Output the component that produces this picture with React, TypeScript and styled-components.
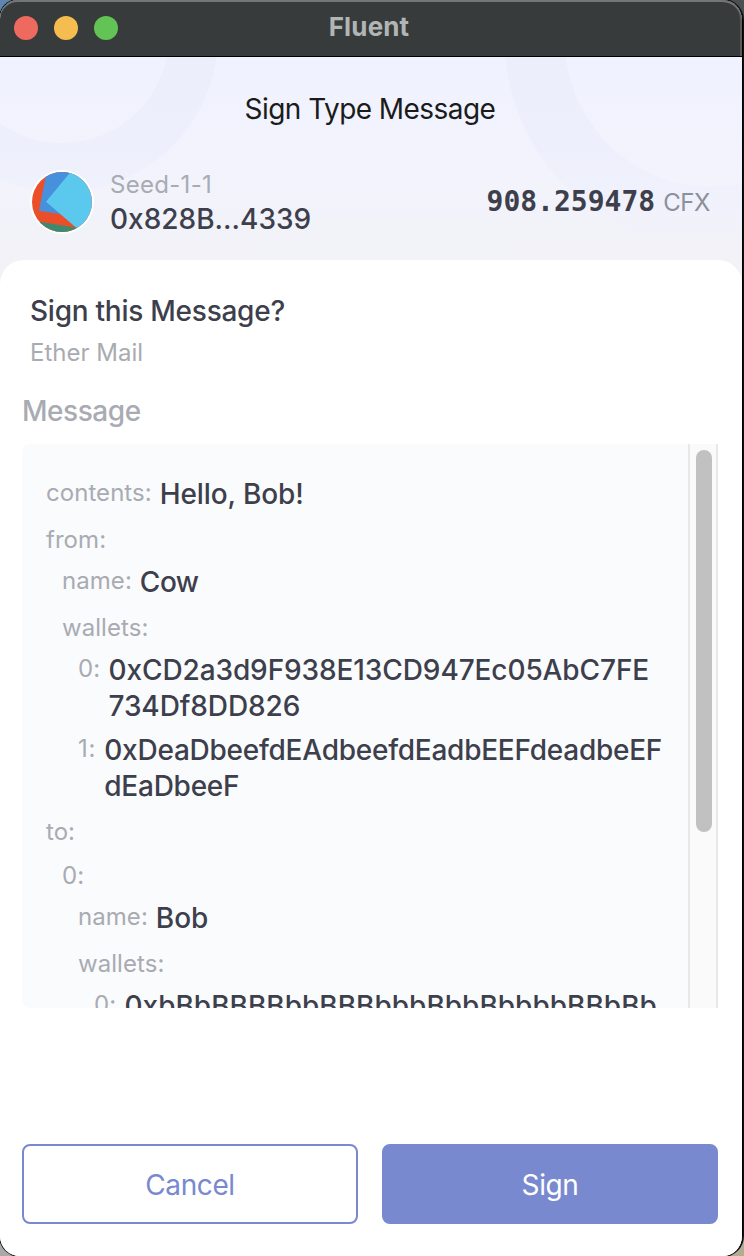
import React from "react";
import styled, { createGlobalStyle } from "styled-components";

const GlobalStyle = createGlobalStyle`
  * { box-sizing: border-box; }
  body { margin: 0; overflow: hidden; }
`;

const Desktop = styled.div`
  width: 744px;
  height: 1256px;
  overflow: hidden;
  padding-right: 1px;
  font-family: Inter, "Liberation Sans", sans-serif;
  background: linear-gradient(#5d87b0, #5d87b0) 0 0 / 30px 30px no-repeat,
    linear-gradient(#a9a9a9, #a9a9a9) 0 100% / 30px 30px no-repeat,
    linear-gradient(to bottom, #4c4f52 0 57px, #15171a 57px 157px, #aaa78c 157px 278px, #3f619b 278px 388px, #aaa588 388px 523px, #8b8b8b 523px 750px, #2f5190 750px 859px, #aaa78c 859px 1080px, #3f619b 1080px 1190px, #b3ab93 1190px);
`;

const Window = styled.div`
  position: relative;
  display: flex;
  flex-direction: column;
  height: 1256px;
  border-right: 1px solid #000;
  border-radius: 18px 20px 20px 20px;
  box-shadow: 0 0 0 1px #111;
  overflow: hidden;
  background: #fff;
`;

const TitleBar = styled.header`
  display: grid;
  grid-template-columns: 1fr auto 1fr;
  align-items: center;
  height: 57px;
  padding: 1px 18px 2px 14px;
  background: #383b3b;
  border-bottom: 1px solid #000;
  border-radius: 18px 20px 0 0;
  box-shadow: inset 0 2px 0 #747676, inset -2px 0 0 #5a5c5c;
`;

const Lights = styled.div`
  display: flex;
  gap: 16px;
`;

const Light = styled.span<{ $color: string }>`
  width: 24px;
  height: 24px;
  border-radius: 50%;
  background: ${(p) => p.$color};
`;

const WindowTitle = styled.h1`
  margin: 0;
  padding-bottom: 2px;
  font-size: 26px;
  line-height: 32px;
  letter-spacing: 0.15px;
  font-weight: 700;
  color: #b2b5b5;
`;

const Hero = styled.section`
  position: relative;
  height: 227px;
  margin-bottom: -24px;
  background: linear-gradient(#f0f2ff, #f2f3fb 60%, #f2f2f6);
`;

const Rings = styled.svg`
  position: absolute;
  inset: 0;
`;

const HeroContent = styled.div`
  position: relative;
  padding: 32px 32px 0 30px;
`;

const PageTitle = styled.h2`
  margin: 0 0 41px;
  text-align: center;
  font-size: 28px;
  line-height: 40px;
  letter-spacing: -0.55px;
  font-weight: 400;
  color: #1b1b1c;
`;

const Account = styled.div`
  display: flex;
  align-items: center;
  height: 64px;
`;

const Identity = styled.div`
  flex: 1;
  margin-left: 16px;
  padding-top: 1px;
`;

const AccountName = styled.div`
  font-size: 24px;
  line-height: 32px;
  letter-spacing: 0.3px;
  color: #a9abb2;
`;

const Address = styled.div`
  font-size: 28px;
  line-height: 36px;
  font-weight: 500;
  color: #3d3f4c;
`;

const Balance = styled.div`
  display: flex;
  align-items: baseline;
  gap: 8px;
`;

const Amount = styled.span`
  font: 700 28px/36px "DejaVu Sans Mono", monospace;
  color: #3d3f4c;
`;

const Unit = styled.span`
  font-size: 24px;
  letter-spacing: -0.4px;
  color: #8d8f9b;
`;

const Card = styled.main`
  position: relative;
  display: flex;
  flex-direction: column;
  flex: 1;
  padding: 33px 24px 32px 22px;
  border-radius: 24px 24px 0 0;
  background: #fff;
`;

const Question = styled.h3`
  margin: 0 0 8px 8px;
  font-size: 28px;
  line-height: 36px;
  letter-spacing: -0.25px;
  font-weight: 500;
  color: #3d3f4c;
`;

const Domain = styled.div`
  margin: 0 0 24px 8px;
  font-size: 24px;
  line-height: 32px;
  color: #a9abb2;
`;

const SectionLabel = styled.div`
  margin-bottom: 15px;
  font-size: 28px;
  line-height: 36px;
  letter-spacing: -0.45px;
  font-weight: 500;
  color: #a9abb2;
`;

const MessageBox = styled.div`
  display: flex;
  height: 564px;
  overflow: hidden;
  border-radius: 8px 0 0 8px;
  background: #fafbfd;
`;

const Tree = styled.div`
  display: flex;
  flex-direction: column;
  flex: 1;
  gap: 8px;
  min-width: 0;
  padding: 32px 24px 0;
`;

const Row = styled.div<{ $depth: number }>`
  display: flex;
  flex-shrink: 0;
  min-height: 36px;
  margin-left: ${(p) => p.$depth * 16}px;
  font-size: 28px;
  line-height: 36px;
`;

const Key = styled.span<{ $tracking?: number }>`
  flex-shrink: 0;
  margin-right: 8px;
  font-size: 24px;
  line-height: 34px;
  letter-spacing: ${(p) => p.$tracking ?? 0.05}px;
  color: #a9abb2;
`;

const GroupKey = styled(Key)`
  height: 36px;
  padding-top: 3px;
`;

const Value = styled.span<{ $tracking?: number }>`
  font-weight: 500;
  letter-spacing: ${(p) => p.$tracking ?? -0.1}px;
  white-space: pre;
  color: #3d3f4c;
`;

const ScrollTrack = styled.div`
  flex-shrink: 0;
  width: 30px;
  padding: 6px 4px 0 6px;
  border: solid #e8e8e8;
  border-width: 0 2px;
  background: #fafafa;
`;

const ScrollThumb = styled.div`
  width: 16px;
  height: 382px;
  border-radius: 8px;
  background: #c1c1c1;
`;

const Actions = styled.footer`
  display: grid;
  grid-template-columns: 1fr 1fr;
  gap: 24px;
  margin-top: auto;
`;

const Button = styled.button<{ $primary?: boolean }>`
  height: 80px;
  padding: 1px 0 0;
  border: 2px solid #7889cf;
  border-radius: 8px;
  font: 400 28px/36px Inter, sans-serif;
  letter-spacing: -0.4px;
  background: ${(p) => (p.$primary ? "#7889cf" : "#fff")};
  color: ${(p) => (p.$primary ? "#fff" : "#7889cf")};
`;

type Entry = {
  depth: number;
  name: string;
  value?: string;
  keyTracking?: number;
  tracking?: number;
};

const entries: Entry[] = [
  { depth: 0, name: "contents", value: "Hello, Bob!" },
  { depth: 0, name: "from" },
  { depth: 1, name: "name", value: "Cow", tracking: -0.5 },
  { depth: 1, name: "wallets" },
  { depth: 2, name: "0", value: "0xCD2a3d9F938E13CD947Ec05AbC7FE\n734Df8DD826", keyTracking: 0.2 },
  { depth: 2, name: "1", value: "0xDeaDbeefdEAdbeefdEadbEEFdeadbeEF\ndEaDbeeF", keyTracking: 0.8, tracking: -0.25 },
  { depth: 0, name: "to" },
  { depth: 1, name: "0" },
  { depth: 2, name: "name", value: "Bob" },
  { depth: 2, name: "wallets" },
  { depth: 3, name: "0", value: "0xbBbBBBBbbBBBbbbBbbBbbbbBBbBb", keyTracking: 0.2, tracking: 0 },
];

const Avatar = () => (
  <svg width="64" height="64" viewBox="0 0 64 64">
    <defs>
      <clipPath id="face">
        <circle cx="32" cy="32" r="30" />
      </clipPath>
    </defs>
    <circle cx="32" cy="32" r="32" fill="#fff" />
    <g clipPath="url(#face)">
      <rect width="66" height="64" fill="#eb4f2a" />
      <path d="M17 0H50L36 45L9 40.7Z" fill="#4690dc" />
      <path d="M43 -1L16 31.7L50 61L70 50V0Z" fill="#5bc9ee" />
      <path d="M8 51.5L48 58V66H8Z" fill="#3e8a70" />
    </g>
  </svg>
);

export default function App() {
  return (
    <Desktop>
      <GlobalStyle />
      <Window>
        <TitleBar>
          <Lights>
            <Light $color="#ee6a5f" />
            <Light $color="#f5bd4f" />
            <Light $color="#61c454" />
          </Lights>
          <WindowTitle>Fluent</WindowTitle>
        </TitleBar>
        <Hero>
          <Rings width="742" height="227" fill="none">
            <defs>
              <linearGradient id="fade" gradientUnits="userSpaceOnUse" x1="0" y1="0" x2="0" y2="185">
                <stop offset="0" stopColor="#eceefc" />
                <stop offset="0.5" stopColor="#edeffc" />
                <stop offset="1" stopColor="#eef0fc" stopOpacity="0" />
              </linearGradient>
            </defs>
            <circle cx="62" cy="-21" r="131.5" stroke="url(#fade)" strokeWidth="49" />
            <circle cx="712" cy="-17" r="177" stroke="url(#fade)" strokeWidth="60" />
          </Rings>
          <HeroContent>
            <PageTitle>Sign Type Message</PageTitle>
            <Account>
              <Avatar />
              <Identity>
                <AccountName>Seed-1-1</AccountName>
                <Address>0x828B...4339</Address>
              </Identity>
              <Balance>
                <Amount>908.259478</Amount>
                <Unit>CFX</Unit>
              </Balance>
            </Account>
          </HeroContent>
        </Hero>
        <Card>
          <Question>Sign this Message?</Question>
          <Domain>Ether Mail</Domain>
          <SectionLabel>Message</SectionLabel>
          <MessageBox>
            <Tree>
              {entries.map((entry, i) => (
                <Row key={i} $depth={entry.depth}>
                  {entry.value ? (
                    <>
                      <Key $tracking={entry.keyTracking}>{entry.name}:</Key>
                      <Value $tracking={entry.tracking}>{entry.value}</Value>
                    </>
                  ) : (
                    <GroupKey>{entry.name}:</GroupKey>
                  )}
                </Row>
              ))}
            </Tree>
            <ScrollTrack>
              <ScrollThumb />
            </ScrollTrack>
          </MessageBox>
          <Actions>
            <Button>Cancel</Button>
            <Button $primary>Sign</Button>
          </Actions>
        </Card>
      </Window>
    </Desktop>
  );
}
